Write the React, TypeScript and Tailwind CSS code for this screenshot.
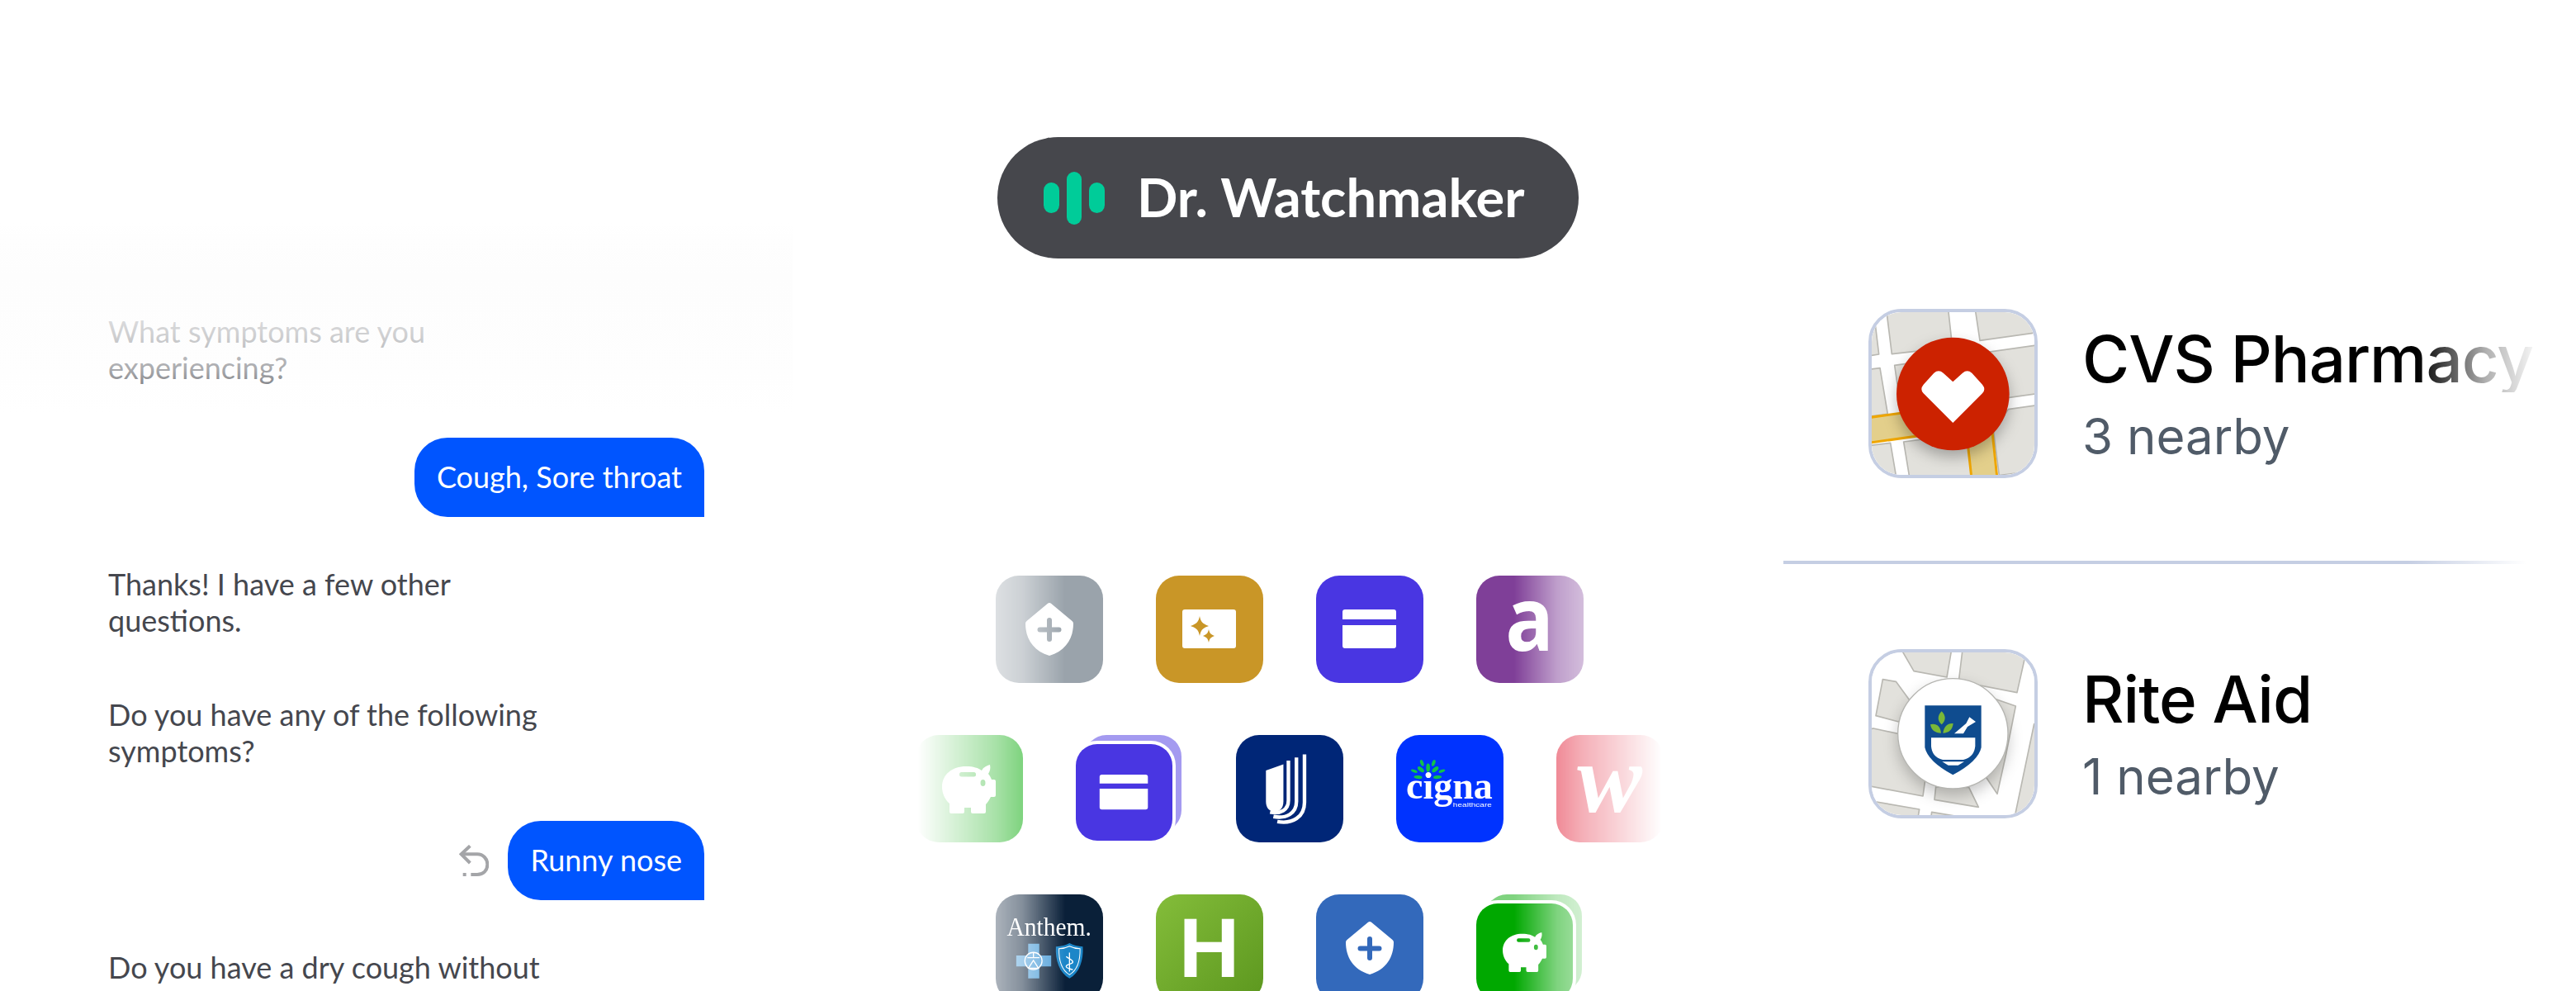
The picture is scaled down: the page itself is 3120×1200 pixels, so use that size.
import React from "react";

const Shield = ({ fill, plus }: { fill: string; plus: string }) => (
  <svg viewBox="0 0 130 130" className="w-full h-full">
    <path
      d="M65 33a3 3 0 0 1 2 .8L92.500 55a4 4 0 0 1 1.500 3C94 76 85 91 65 97C45 91 36 76 36 58a4 4 0 0 1 1.500-3L63 33.800a3 3 0 0 1 2-.8z"
      fill={fill}
    />
    <path d="M65 54v23M53.500 65.500h23" stroke={plus} strokeWidth="6" strokeLinecap="round" fill="none" />
  </svg>
);

const Card = () => (
  <svg viewBox="0 0 130 130" className="w-full h-full">
    <path d="M35 41h59a3 3 0 0 1 3 3v9H32v-9a3 3 0 0 1 3-3zM32 60h65v25a3 3 0 0 1-3 3H35a3 3 0 0 1-3-3z" fill="#fff" />
  </svg>
);

const Sparkles = () => (
  <svg viewBox="0 0 130 130" className="w-full h-full">
    <rect x="32" y="41" width="65" height="47" rx="3" fill="#fff" />
    <path d="M53 49c1.500 7 3 9 11 12c-8 3-9.500 5-11 12c-1.500-7-3-9-11-12c8-3 9.500-5 11-12z" fill="#c99627" />
    <path d="M64 65c1 4.500 2 6 7 8c-5 2-6 3.500-7 8c-1-4.500-2-6-7-8c5-2 6-3.500 7-8z" fill="#c99627" />
  </svg>
);

const Piggy = ({ color, className }: { color: string; className: string }) => (
  <svg viewBox="0 0 65 59" className={className}>
    <path
      d="M29 2C38 2 44 4 48 7C50 3 54 1 58 0C59 4 58 8 56 11C58 13 59 16 60 18H63a2 2 0 0 1 2 2V37a2 2 0 0 1-2 2H59C57 43 55 46 53 48V57a2 2 0 0 1-2 2H37a2 2 0 0 1-2-2V52H27V57a2 2 0 0 1-2 2H11a2 2 0 0 1-2-2V47C3 42 0 34 0 27C0 12 12 2 29 2z"
      fill="#fff"
    />
    <rect x="21" y="9" width="20" height="5.500" rx="2.500" fill={color} />
    <ellipse cx="49.500" cy="22" rx="3" ry="4" fill={color} />
  </svg>
);

const Uhc = () => (
  <svg viewBox="47 32 387 387" className="w-full h-full">
    <path d="M155 160L218 138V272C218 296 205 308 188 309C168 309 155 296 155 272z" fill="#fff" />
    <g stroke="#fff" strokeWidth="13" fill="none">
      <path d="M236 124V268C236 302 208 318 170 310" />
      <path d="M265 113V272C265 315 228 335 182 326" />
      <path d="M294 102V275C294 328 250 354 196 344" />
    </g>
  </svg>
);

const Cigna = () => (
  <svg viewBox="627 32 387 387" className="w-full h-full">
    <g fill="#12c24a">
      <ellipse cx="720" cy="133" rx="6" ry="12" transform="rotate(-20 720 133)" />
      <ellipse cx="762" cy="133" rx="6" ry="12" transform="rotate(20 762 133)" />
      <ellipse cx="716" cy="156" rx="7" ry="14" transform="rotate(-50 716 156)" />
      <ellipse cx="742" cy="150" rx="7" ry="15" />
      <ellipse cx="768" cy="156" rx="7" ry="14" transform="rotate(50 768 156)" />
      <ellipse cx="692" cy="162" rx="5" ry="12" transform="rotate(-70 692 162)" />
      <ellipse cx="792" cy="162" rx="5" ry="12" transform="rotate(70 792 162)" />
      <ellipse cx="706" cy="184" rx="6" ry="15" transform="rotate(-85 706 184)" />
      <ellipse cx="776" cy="184" rx="6" ry="15" transform="rotate(85 776 184)" />
    </g>
    <circle cx="743" cy="180" r="7" fill="#fff" />
    <text x="663" y="262" fill="#fff" fontFamily="'Liberation Serif',serif" fontWeight="700" fontSize="138" textLength="312" lengthAdjust="spacingAndGlyphs">cigna</text>
    <text x="832" y="290" fill="#fff" fontFamily="'Liberation Sans',sans-serif" fontSize="24" textLength="140" lengthAdjust="spacingAndGlyphs">healthcare</text>
  </svg>
);

const Anthem = () => (
  <svg viewBox="18 12 387 387" className="w-full h-full">
    <text x="58" y="160" fill="#fff" fontFamily="'Liberation Serif',serif" fontSize="94" textLength="305" lengthAdjust="spacingAndGlyphs">Anthem.</text>
    <path d="M135 190h40v42h43v40h-43v43h-40v-43H92v-40h43z" fill="#4f9fd9" />
    <circle cx="154" cy="252" r="31" fill="none" stroke="#fff" strokeWidth="4" />
    <path d="M154 222v20M132 240h44M154 250l-18 28h36z" fill="none" stroke="#fff" strokeWidth="4" />
    <path d="M235 200C255 200 270 196 284 188C298 196 315 200 332 200C335 250 320 295 284 315C248 295 232 250 235 200z" fill="#1c86c8" />
    <path d="M246 208C260 208 272 205 284 199C296 205 308 208 322 208C323 250 312 285 284 302C256 285 245 250 246 208z" fill="none" stroke="#fff" strokeWidth="3" />
    <path d="M284 222V290M272 236C284 246 296 248 296 256C296 264 272 262 272 272C272 280 290 280 296 284" fill="none" stroke="#fff" strokeWidth="4" />
  </svg>
);

const CvsMap = () => (
  <svg viewBox="82 55 591 591" className="w-full h-full block">
    <rect x="82" y="55" width="591" height="591" fill="#fff" />
    <g fill="#e2e1dc" stroke="#b9b8b2" strokeWidth="5" strokeLinejoin="round">
      <path d="M70 100L95 100L108 208L70 214z" />
      <path d="M135 45H360L375 182L155 207z" />
      <path d="M458 45H690V128L475 158z" />
      <path d="M70 263L112 258L140 425L70 434z" />
      <path d="M165 248L690 174V350L190 420z" />
      <path d="M70 540L150 530L172 660H70z" />
      <path d="M198 526L432 496L446 660H220z" />
      <path d="M578 408L690 392V630L545 648L525 490z" />
    </g>
    <g fill="#e3cf8b" stroke="#efa600" strokeWidth="9">
      <path d="M70 438L260 412L270 502L70 530z" />
      <path d="M425 480L518 470L538 660H445z" />
    </g>
    <circle cx="377" cy="352" r="205" fill="#cc2200" className="[filter:drop-shadow(0_24px_26px_rgba(0,0,0,.28))]" />
    <path d="M377 308L342 276Q325 262 308 276L270 318Q256 335 270 350L377 457L484 350Q498 335 484 318L446 276Q429 262 412 276z" fill="#fff" />
  </svg>
);

const RiteMap = () => (
  <svg viewBox="82 60 591 591" className="w-full h-full block">
    <rect x="82" y="60" width="591" height="591" fill="#fff" />
    <g fill="#e2e1dc" stroke="#b9b8b2" strokeWidth="5" strokeLinejoin="round">
      <path d="M190 50H372L355 150L235 128z" />
      <path d="M412 50H645L610 206L398 165z" />
      <path d="M122 158L170 166L228 245L180 312L97 290z" />
      <path d="M88 336L200 360L282 480L268 582L70 545V340z" />
      <path d="M510 222L605 255L570 430L538 574L495 510z" />
      <path d="M315 548L435 550L470 622L310 595z" />
      <path d="M602 655L672 320L690 320V655z" />
      <path d="M70 598L255 630L250 660H70z" />
      <path d="M300 640L390 655H298z" />
    </g>
    <circle cx="377" cy="355" r="200" fill="#fff" stroke="#b5b5b1" strokeWidth="4" className="[filter:drop-shadow(0_24px_26px_rgba(0,0,0,.22))]" />
    <path d="M275 253H480V405Q470 455 377 505Q285 455 275 405z" fill="#0f4c8f" />
    <path d="M298 370H458V400Q455 440 415 450H340Q300 440 298 400z" fill="#fff" />
    <path d="M338 457H418L396 470H360z" fill="#fff" />
    <path d="M382 355H415L430 330L460 312L437 295L425 318z" fill="#fff" />
    <g fill="#7ab838">
      <path d="M336 274C352 290 352 308 336 322C320 308 320 290 336 274z" />
      <path d="M295 322C315 316 332 328 334 353C312 353 298 342 295 322z" />
      <path d="M378 318C358 316 344 328 341 353C362 353 376 340 378 318z" />
    </g>
  </svg>
);

const tile = "w-[130px] h-[130px] rounded-[28px] overflow-hidden shrink-0";
const stackFace = "absolute w-[117px] h-[117px] rounded-[26px]";
const chatText = "text-[36px] leading-[44px] text-[#45474e] w-[540px] shrink-0 -translate-y-[2px]";
const bubble = "h-[96px] px-[27px] pb-[3px] flex items-center self-end bg-[#0055ff] text-white text-[36px] leading-[44px] rounded-t-[40px] rounded-bl-[40px] shrink-0";

export default function App() {
  return (
    <div className="relative w-[3120px] h-[1200px] overflow-hidden bg-white flex font-['Lato',sans-serif]">
      {/* chat */}
      <div className="w-[1040px] shrink-0 pl-[131px] pr-[187px] pt-[271px] flex flex-col">
        <p className={chatText}>need.</p>
        <p className={`${chatText} mt-[66px]`}>What symptoms are you experiencing?</p>
        <div className={`${bubble} mt-[61px]`}>Cough, Sore throat</div>
        <p className={`${chatText} mt-[61px]`}>Thanks! I have a few other questions.</p>
        <p className={`${chatText} mt-[70px]`}>Do you have any of the following symptoms?</p>
        <div className="flex items-center self-end gap-[23px] mt-[61px] shrink-0">
          <svg viewBox="52 64 108 114" className="w-[36px] h-[38px]" fill="none" stroke="#a4a5a8" strokeWidth="12">
            <path d="M92 68L60 98L92 130" />
            <path d="M60 98H118C140 98 155 115 155 135C155 157 140 172 118 172H95" />
            <path d="M66 172H78" />
          </svg>
          <div className={`${bubble} self-auto`}>Runny nose</div>
        </div>
        <p className={`${chatText} mt-[61px]`}>Do you have a dry cough without</p>
      </div>
      <div className="absolute left-0 top-[270px] w-[960px] h-[230px] bg-[linear-gradient(to_bottom,#ffffff_0%,#fefefe_8%,#fdfdfd_28%,rgba(253,253,253,.75)_59%,rgba(253,253,253,.55)_77%,rgba(253,253,253,0)_100%)] pointer-events-none" />

      {/* middle */}
      <div className="w-[1040px] shrink-0 flex flex-col items-center pt-[166px]">
        <div className="w-[704px] h-[147px] shrink-0 rounded-full bg-[#46474c] flex items-center pl-[56px] gap-[39px]">
          <div className="flex items-center gap-[9px]">
            <div className="w-[19px] h-[37px] rounded-full bg-[#00cc99]" />
            <div className="w-[18px] h-[64px] rounded-full bg-[#00cc99]" />
            <div className="w-[19px] h-[37px] rounded-full bg-[#00cc99]" />
          </div>
          <span className="text-white text-[65px] font-bold leading-none whitespace-nowrap pb-[3px]">Dr. Watchmaker</span>
        </div>

        <div className="mt-[384px] ml-[3px] w-[906px] shrink-0 flex flex-col items-center gap-[63px] [mask-image:linear-gradient(to_right,transparent_2px,rgba(0,0,0,.34)_97px,rgba(0,0,0,.5)_129px,#000_181px,#000_725px,rgba(0,0,0,.5)_777px,rgba(0,0,0,.34)_809px,transparent_904px)]">
          <div className="flex gap-[64px]">
            <div className={`${tile} bg-[#9aa3ab]`}><Shield fill="#fff" plus="#9aa3ab" /></div>
            <div className={`${tile} bg-[#c99627]`}><Sparkles /></div>
            <div className={`${tile} bg-[#4936e2]`}><Card /></div>
            <div className={`${tile} bg-[#7f3f98] flex items-center justify-center text-white font-['Open_Sans',sans-serif] font-bold text-[108px] leading-none pb-[30px]`}>
              <span className="[transform:scaleX(.9)]">a</span>
            </div>
          </div>
          <div className="flex gap-[64px]">
            <div className={`${tile} bg-[#00a800] flex items-center justify-center`}>
              <Piggy color="#00a800" className="w-[65px] h-[59px]" />
            </div>
            <div className="relative w-[130px] h-[130px] shrink-0">
              <div className={`${stackFace} left-[11px] top-0 bg-[#4936e2] opacity-50`} />
              <div className={`${stackFace} left-0 top-[11px] bg-[#4936e2] shadow-[0_0_0_4px_#fff] overflow-hidden`}><Card /></div>
            </div>
            <div className={`${tile} bg-[#002677]`}><Uhc /></div>
            <div className={`${tile} bg-[#0033ff]`}><Cigna /></div>
            <div className={`${tile} bg-[#e11931] flex items-center justify-center text-white font-['Liberation_Serif',serif] italic font-bold text-[118px] leading-none pb-[22px]`}>w</div>
          </div>
          <div className="flex gap-[64px]">
            <div className={`${tile} bg-[#0a2039]`}><Anthem /></div>
            <div className={`${tile} bg-linear-to-br from-[#84bd3a] to-[#5c971e] flex items-center justify-center text-white font-['Liberation_Sans',sans-serif] font-bold text-[102px] leading-none`}>H</div>
            <div className={`${tile} bg-[#3369bb]`}><Shield fill="#fff" plus="#3369bb" /></div>
            <div className="relative w-[130px] h-[130px] shrink-0">
              <div className={`${stackFace} left-[11px] top-0 bg-[#00a800] opacity-50`} />
              <div className={`${stackFace} left-0 top-[11px] bg-[#00a800] shadow-[0_0_0_4px_#fff] flex items-center justify-center`}>
                <Piggy color="#00a800" className="w-[53px] h-[48px]" />
              </div>
            </div>
          </div>
        </div>
      </div>

      {/* right */}
      <div className="flex-1 min-w-0 pl-[80px] pt-[374px] flex flex-col font-['Inter',sans-serif]">
        <div className="flex items-center gap-[54px] pl-[103px]">
          <div className="w-[205px] h-[205px] rounded-[40px] border-4 border-[#c5cee3] overflow-hidden shrink-0"><CvsMap /></div>
          <div className="flex flex-col gap-[13px] pt-[10px]">
            <div className="w-[560px] text-[78px] leading-[80px] font-medium tracking-[-1px] text-black whitespace-nowrap [mask-image:linear-gradient(to_right,#000_405px,rgba(0,0,0,.3)_490px,rgba(0,0,0,.05)_545px,transparent_560px)]">CVS Pharmacy</div>
            <div className="text-[60px] leading-[80px] text-[#505b68]">3 nearby</div>
          </div>
        </div>
        <div className="w-[900px] h-[4px] mt-[100px] bg-linear-to-r from-[#c5cee3] via-[#c5cee3] via-84% to-transparent" />
        <div className="flex items-center gap-[54px] pl-[103px] mt-[103px]">
          <div className="w-[205px] h-[205px] rounded-[40px] border-4 border-[#c5cee3] overflow-hidden shrink-0"><RiteMap /></div>
          <div className="flex flex-col gap-[13px] pt-[10px]">
            <div className="text-[78px] leading-[80px] font-medium tracking-[-1px] text-black">Rite Aid</div>
            <div className="text-[60px] leading-[80px] text-[#505b68]">1 nearby</div>
          </div>
        </div>
      </div>
    </div>
  );
}
